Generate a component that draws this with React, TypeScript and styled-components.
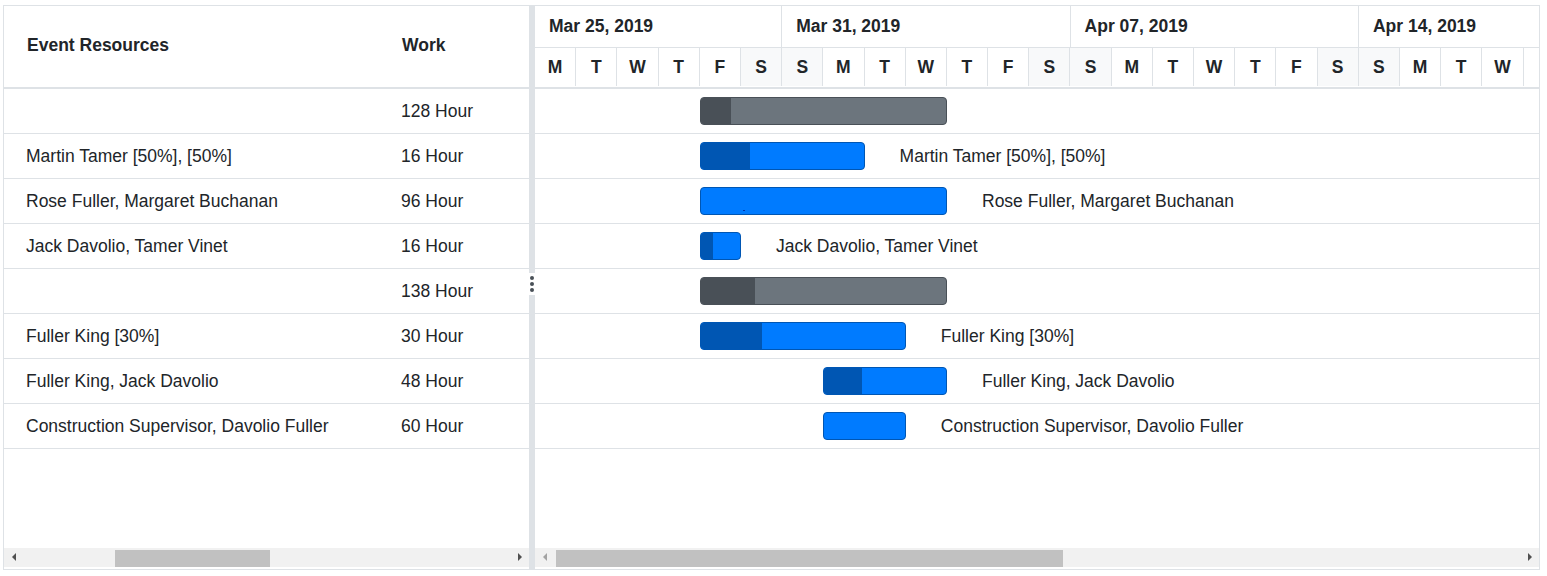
import React from "react";
import styled, { createGlobalStyle } from "styled-components";

const DAY_W = 41.2;
const ROW_H = 45;

type Task = {
  resources: string;
  work: string;
  start: number;
  days: number;
  progress: number;
  parent?: boolean;
};

const tasks: Task[] = [
  { resources: "", work: "128 Hour", start: 4, days: 6, progress: 12.5, parent: true },
  { resources: "Martin Tamer [50%], [50%]", work: "16 Hour", start: 4, days: 4, progress: 30 },
  { resources: "Rose Fuller, Margaret Buchanan", work: "96 Hour", start: 4, days: 6, progress: 0 },
  { resources: "Jack Davolio, Tamer Vinet", work: "16 Hour", start: 4, days: 1, progress: 31 },
  { resources: "", work: "138 Hour", start: 4, days: 6, progress: 22, parent: true },
  { resources: "Fuller King [30%]", work: "30 Hour", start: 4, days: 5, progress: 30 },
  { resources: "Fuller King, Jack Davolio", work: "48 Hour", start: 7, days: 3, progress: 31 },
  { resources: "Construction Supervisor, Davolio Fuller", work: "60 Hour", start: 7, days: 2, progress: 0 },
];

const weeks = [
  { label: "Mar 25, 2019", days: 6 },
  { label: "Mar 31, 2019", days: 7 },
  { label: "Apr 07, 2019", days: 7 },
  { label: "Apr 14, 2019", days: 7 },
];

// week starts on Monday Mar 25
const dayLetters = ["M", "T", "W", "T", "F", "S", "S"];
const days = Array.from({ length: 26 }, (_, i) => ({
  letter: dayLetters[i % 7],
  weekend: i % 7 === 5 || i % 7 === 6,
}));

const GlobalStyle = createGlobalStyle`
  body {
    margin: 0;
    background: #fff;
    font-family: "Liberation Sans", Arial, sans-serif;
    color: #212529;
  }
`;

const Page = styled.div`
  padding: 5px 0 0 3px;
`;

const Gantt = styled.div`
  box-sizing: border-box;
  width: 1537px;
  height: 565px;
  border: 1px solid #dee2e6;
  display: flex;
  background: #fff;
  font-size: 17.5px;
`;

const Pane = styled.div<{ $width?: number }>`
  display: flex;
  flex-direction: column;
  overflow: hidden;
  padding-bottom: 2px;
  ${(p) => (p.$width ? `width: ${p.$width}px; flex: none;` : "flex: 1; min-width: 0;")}
`;

const GridHeader = styled.div`
  box-sizing: border-box;
  height: 83px;
  border-bottom: 2px solid #dee2e6;
  display: grid;
  grid-template-columns: 375px 1fr;
  align-items: center;
  font-weight: bold;
  padding-bottom: 2px;
`;

const GridRow = styled.div`
  box-sizing: border-box;
  height: ${ROW_H}px;
  border-bottom: 1px solid #dee2e6;
  display: grid;
  grid-template-columns: 375px 1fr;
  align-items: center;
`;

const Cell = styled.div<{ $pad: number }>`
  padding-left: ${(p) => p.$pad}px;
  white-space: nowrap;
  overflow: hidden;
`;

const Filler = styled.div`
  flex: 1;
`;

const Splitter = styled.div`
  width: 6px;
  flex: none;
  background: #dee2e6;
  display: flex;
  align-items: center;
  justify-content: center;
`;

const Handle = styled.div`
  background: #fff;
  width: 6px;
  height: 22px;
  margin-top: -8px;
  display: flex;
  flex-direction: column;
  align-items: center;
  justify-content: center;
  gap: 2px;
`;

const Dot = styled.span`
  width: 4px;
  height: 4px;
  border-radius: 50%;
  background: #495057;
`;

const TimelineHeader = styled.div`
  box-sizing: border-box;
  height: 83px;
  border-bottom: 2px solid #dee2e6;
  display: flex;
  flex-direction: column;
  font-weight: bold;
`;

const Tier = styled.div<{ $h: number }>`
  height: ${(p) => p.$h}px;
  display: flex;
  flex: none;
`;

const WeekCell = styled.div<{ $days: number }>`
  box-sizing: border-box;
  width: ${(p) => p.$days * DAY_W}px;
  flex: none;
  border-right: 1px solid #dee2e6;
  padding-left: 14px;
  display: flex;
  align-items: center;
  white-space: nowrap;
`;

const DayCell = styled.div<{ $weekend: boolean }>`
  box-sizing: border-box;
  width: ${DAY_W}px;
  flex: none;
  border-right: 1px solid #dee2e6;
  border-top: 1px solid #dee2e6;
  background: ${(p) => (p.$weekend ? "#f8f9fa" : "#fff")};
  display: flex;
  align-items: center;
  justify-content: center;
`;

const ChartRow = styled.div`
  box-sizing: border-box;
  height: ${ROW_H}px;
  border-bottom: 1px solid #dee2e6;
  position: relative;
`;

const Bar = styled.div<{ $parent?: boolean }>`
  position: absolute;
  top: 8px;
  height: 28px;
  box-sizing: border-box;
  border-radius: 4px;
  overflow: hidden;
  background: ${(p) => (p.$parent ? "#6c757d" : "#007bff")};
  border: 1px solid ${(p) => (p.$parent ? "#495057" : "#0056b3")};
`;

const Progress = styled.div<{ $parent?: boolean }>`
  height: 100%;
  background: ${(p) => (p.$parent ? "#495057" : "#0056b3")};
`;

const ZeroMark = styled.span`
  position: absolute;
  left: 42px;
  bottom: 3px;
  width: 2px;
  height: 1px;
  background: #0033aa;
`;

const BarLabel = styled.span`
  position: absolute;
  top: 0;
  height: 100%;
  display: flex;
  align-items: center;
  white-space: nowrap;
`;

const Track = styled.div`
  height: 19px;
  flex: none;
  background: #f1f1f1;
  display: flex;
  align-items: flex-start;
  position: relative;
`;

const Arrow = styled.span<{ $dir: "left" | "right"; $disabled?: boolean }>`
  position: absolute;
  top: 5px;
  ${(p) => (p.$dir === "left" ? "left: 8px;" : "right: 7px;")}
  width: 0;
  height: 0;
  border-top: 4px solid transparent;
  border-bottom: 4px solid transparent;
  ${(p) =>
    p.$dir === "left"
      ? `border-right: 4px solid ${p.$disabled ? "#a3a3a3" : "#505050"};`
      : `border-left: 4px solid ${p.$disabled ? "#a3a3a3" : "#505050"};`}
`;

const Thumb = styled.div<{ $left: number; $width: number }>`
  margin-left: ${(p) => p.$left}px;
  width: ${(p) => p.$width}px;
  height: 17px;
  margin-top: 2px;
  background: #c1c1c1;
`;

const Scrollbar = ({ left, width, disabledLeft }: { left: number; width: number; disabledLeft?: boolean }) => (
  <Track>
    <Arrow $dir="left" $disabled={disabledLeft} />
    <Thumb $left={left} $width={width} />
    <Arrow $dir="right" />
  </Track>
);

export default function App() {
  return (
    <Page>
      <GlobalStyle />
      <Gantt>
        <Pane $width={525}>
          <GridHeader>
            <Cell $pad={23}>Event Resources</Cell>
            <Cell $pad={23}>Work</Cell>
          </GridHeader>
          {tasks.map((t, i) => (
            <GridRow key={i}>
              <Cell $pad={22}>{t.resources}</Cell>
              <Cell $pad={22}>{t.work}</Cell>
            </GridRow>
          ))}
          <Filler />
          <Scrollbar left={111} width={155} />
        </Pane>

        <Splitter>
          <Handle>
            <Dot />
            <Dot />
            <Dot />
          </Handle>
        </Splitter>

        <Pane>
          <TimelineHeader>
            <Tier $h={41}>
              {weeks.map((w) => (
                <WeekCell key={w.label} $days={w.days}>
                  {w.label}
                </WeekCell>
              ))}
            </Tier>
            <Tier $h={39}>
              {days.map((d, i) => (
                <DayCell key={i} $weekend={d.weekend}>
                  {i < 24 ? d.letter : ""}
                </DayCell>
              ))}
            </Tier>
          </TimelineHeader>
          {tasks.map((t, i) => {
            const left = t.start * DAY_W;
            const width = t.days * DAY_W;
            return (
              <ChartRow key={i}>
                <Bar $parent={t.parent} style={{ left, width }}>
                  <Progress $parent={t.parent} style={{ width: `${t.progress}%` }} />
                  {t.progress === 0 && i === 2 && <ZeroMark />}
                </Bar>
                {t.resources && <BarLabel style={{ left: left + width + 35 }}>{t.resources}</BarLabel>}
              </ChartRow>
            );
          })}
          <Filler />
          <Scrollbar left={21} width={507} disabledLeft />
        </Pane>
      </Gantt>
    </Page>
  );
}
